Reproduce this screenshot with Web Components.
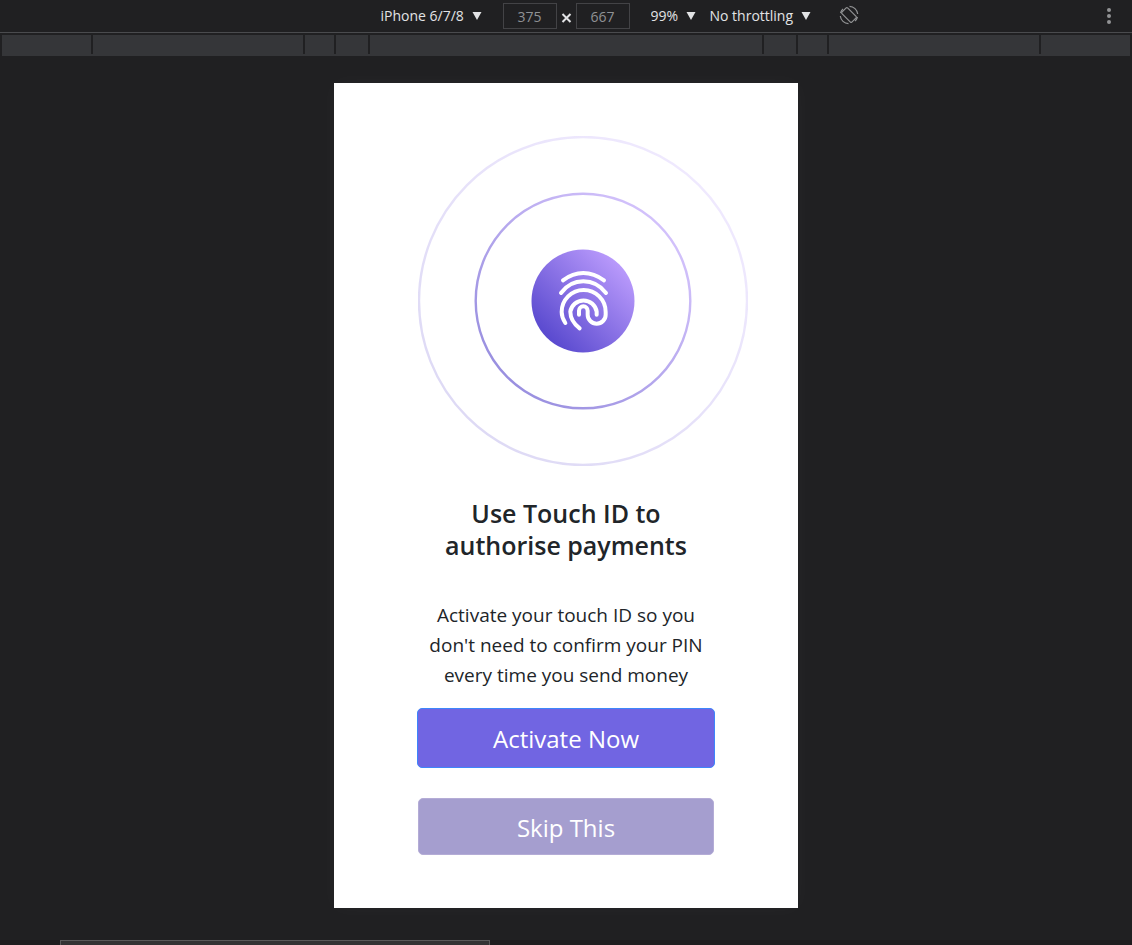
<!DOCTYPE html>
<html lang="en">
<head>
<meta charset="utf-8">
<title>Touch ID – device preview</title>
<style>
  body { margin: 0; background: #202022; font-family: "Open Sans", "Noto Sans", sans-serif; }
</style>
</head>
<body>
<device-preview>
  <device-toolbar slot="toolbar"></device-toolbar>
  <media-ruler slot="ruler"></media-ruler>
  <touch-screen>
    <touch-art slot="art"></touch-art>
    <span slot="title">Use Touch ID to<br>authorise payments</span>
    <span slot="text">Activate your touch ID so you<br>don't need to confirm your PIN<br>every time you send money</span>
    <action-button slot="actions" kind="primary">Activate Now</action-button>
    <action-button slot="actions" kind="muted">Skip This</action-button>
  </touch-screen>
</device-preview>

<script>
function define(name, html) {
  const template = document.createElement('template');
  template.innerHTML = html;
  customElements.define(name, class extends HTMLElement {
    constructor() {
      super();
      this.attachShadow({ mode: 'open' }).append(template.content.cloneNode(true));
    }
  });
}

define('device-preview', `
  <style>
    :host { display: flex; flex-direction: column; min-height: 100vh; overflow-x: hidden; }
    main { flex: 1; display: flex; justify-content: center; align-items: flex-start; padding: 27px 0 32px; }
    footer { display: flex; height: 5px; padding-left: 60px; background: #1f1b1d; }
    .drawer { box-sizing: border-box; width: 430px; border: 1px solid #5a5a5a; border-bottom: 0; background: #333334; }
  </style>
  <slot name="toolbar"></slot>
  <slot name="ruler"></slot>
  <main><slot></slot></main>
  <footer><div class="drawer"></div></footer>
`);

define('tool-select', `
  <style>
    :host { display: flex; align-items: center; gap: 7px; color: #e2e3e5; }
    select { appearance: none; border: 0; margin: 0; padding: 0; background: none; color: inherit;
      font: inherit; line-height: 20px; outline: none; }
    svg { width: 10px; height: 8px; fill: currentColor; }
  </style>
  <select></select>
  <svg viewBox="0 0 10 8" aria-hidden="true"><path d="M0.5 0h9L5 8z"/></svg>
`);
customElements.whenDefined('tool-select').then(() => {
  document.querySelectorAll('device-toolbar').forEach(bar => {
    bar.shadowRoot.querySelectorAll('tool-select').forEach(el => {
      const select = el.shadowRoot.querySelector('select');
      select.setAttribute('aria-label', el.getAttribute('label'));
      select.add(new Option(el.getAttribute('value')));
    });
  });
});

define('device-toolbar', `
  <style>
    :host { display: flex; align-items: center; height: 32px; border-bottom: 1px solid #4a4b4e;
      font-size: 14px; color: #e2e3e5; }
    .tools { flex: 1; display: flex; justify-content: center; align-items: center; padding-left: 153px; height: 32px; }
    .size { display: flex; align-items: center; margin: 0 21px; }
    input { box-sizing: border-box; width: 54px; height: 26px; margin: 0; padding: 0; border: 1px solid #434346;
      background: #202022; color: #8f9194; font: inherit; text-align: center; outline: none; }
    .times { width: 19px; height: 10px; overflow: visible; }
    .zoom { margin-right: 14px; }
    button { display: flex; justify-content: center; align-items: center; margin: 0; padding: 0; border: 0; background: none; color: #929395; }
    .rotate { width: 20px; height: 22px; margin-left: 28px; }
    .more { width: 46px; height: 32px; }
  </style>
  <div class="tools">
    <tool-select label="Device" value="iPhone 6/7/8"></tool-select>
    <div class="size">
      <input aria-label="Width" value="375">
      <svg class="times" viewBox="0 0 19 10" role="img" aria-label="by"><path d="M5.5 3l8 8M13.500 3l-8 8" stroke="#e2e3e5" stroke-width="2"/></svg>
      <input aria-label="Height" value="667">
    </div>
    <tool-select class="zoom" label="Zoom" value="99%"></tool-select>
    <tool-select label="Throttling" value="No throttling"></tool-select>
    <button class="rotate" aria-label="Rotate">
      <svg width="20" height="22" viewBox="0 0 20 22" fill="none" stroke="currentColor" stroke-width="1.2">
        <rect x="6" y="3" width="8" height="14" rx="1" transform="rotate(-45 10 10)"/>
        <path d="M10.500 1.300A8.700 8.700 0 0 1 18.700 9M18.500 12A8.700 8.700 0 0 1 16 16M9.500 18.700A8.700 8.700 0 0 1 1.300 11M1.500 8A8.700 8.700 0 0 1 4 4"/>
      </svg>
    </button>
  </div>
  <button class="more" aria-label="More options">
    <svg width="6" height="18" viewBox="0 0 6 18" fill="currentColor"><circle cx="3" cy="3" r="2"/><circle cx="3" cy="9" r="2"/><circle cx="3" cy="15" r="2"/></svg>
  </button>
`);
document.querySelector('device-toolbar').shadowRoot.querySelectorAll('button').forEach(b => b.type = 'button');

define('media-ruler', `
  <style>
    :host { display: flex; gap: 2px; height: 19px; margin: 2px 2px 0; border-bottom: 2px solid #353639; }
    i { background: #353639; }
    .edge { flex: 1; } .wide { width: 210px; } .small { width: 29px; } .mid { width: 32px; } .centre { width: 392px; }
  </style>
  <i class="edge"></i><i class="wide"></i><i class="small"></i><i class="mid"></i><i class="centre"></i><i class="mid"></i><i class="small"></i><i class="wide"></i><i class="edge"></i>
`);

define('touch-screen', `
  <style>
    :host { display: block; box-sizing: border-box; width: 464px; padding: 53px 84px; background: #fff;
      color: #212529; text-align: center; box-shadow: 0 0 20px #ffffff08; }
    h1 { margin: 31px 0 0; font-size: 25px; font-weight: 600; line-height: 32px; white-space: nowrap; }
    p { margin: 39px 0 0; font-size: 19px; line-height: 30px; font-weight: 400; white-space: nowrap; }
    .actions { display: flex; flex-direction: column; gap: 30px; margin-top: 18px; }
  </style>
  <slot name="art"></slot>
  <h1><slot name="title"></slot></h1>
  <p><slot name="text"></slot></p>
  <div class="actions"><slot name="actions"></slot></div>
`);

define('touch-art', `
  <style>
    :host { display: block; height: 330px; }
    svg { display: block; width: 330px; height: 330px; }
  </style>
  <svg viewBox="0 0 330 330" fill="none" role="img" aria-label="Fingerprint">
    <defs>
      <linearGradient id="disc" x1="0.15" y1="0.85" x2="0.85" y2="0.15"><stop stop-color="#5a4acf"/><stop offset="1" stop-color="#b899fb"/></linearGradient>
      <linearGradient id="ring" x1="0.15" y1="0.85" x2="0.85" y2="0.15"><stop stop-color="#9a90e0"/><stop offset="1" stop-color="#d2c1fb"/></linearGradient>
      <linearGradient id="halo" x1="0.15" y1="0.85" x2="0.85" y2="0.15"><stop stop-color="#dedaf5"/><stop offset="1" stop-color="#efe9fe"/></linearGradient>
    </defs>
    <circle cx="165" cy="165" r="164" stroke="url(#halo)" stroke-width="2.400"/>
    <circle cx="165" cy="165" r="107.300" stroke="url(#ring)" stroke-width="2.400"/>
    <circle cx="165" cy="165" r="51.500" fill="url(#disc)"/>
    <g transform="translate(102 104) scale(.33333)" stroke="#fff" stroke-width="12" stroke-linecap="round" stroke-linejoin="round">
      <path d="M129 121Q158 99 190 99T252 121"/>
      <path d="M123 159Q149 124 190 124T258 159"/>
      <path d="M136 249C127 235 125 226 125 216A66 66 0 0 1 257 216V224A27 27 0 0 1 203 224V212A13 13 0 0 0 177 212V224"/>
      <path d="M179 265C160 250 151 234 151 215A40 40 0 0 1 230 215V224"/>
    </g>
  </svg>
`);

define('action-button', `
  <style>
    :host { display: block; }
    button { display: block; box-sizing: border-box; width: 100%; height: 57px; margin: 0; padding: 2px 0 0; border: 1px solid #b4acd6;
      border-radius: 5px; background: #a59ecf; color: #fff; font: inherit; font-size: 24px; line-height: 38px; }
    :host([kind=primary]) { margin: 0 -1px; }
    :host([kind=primary]) button { height: 60px; border-color: #3d86fb; background: #7165e2; }
  </style>
  <button type="button"><slot></slot></button>
`);
</script>
</body>
</html>
